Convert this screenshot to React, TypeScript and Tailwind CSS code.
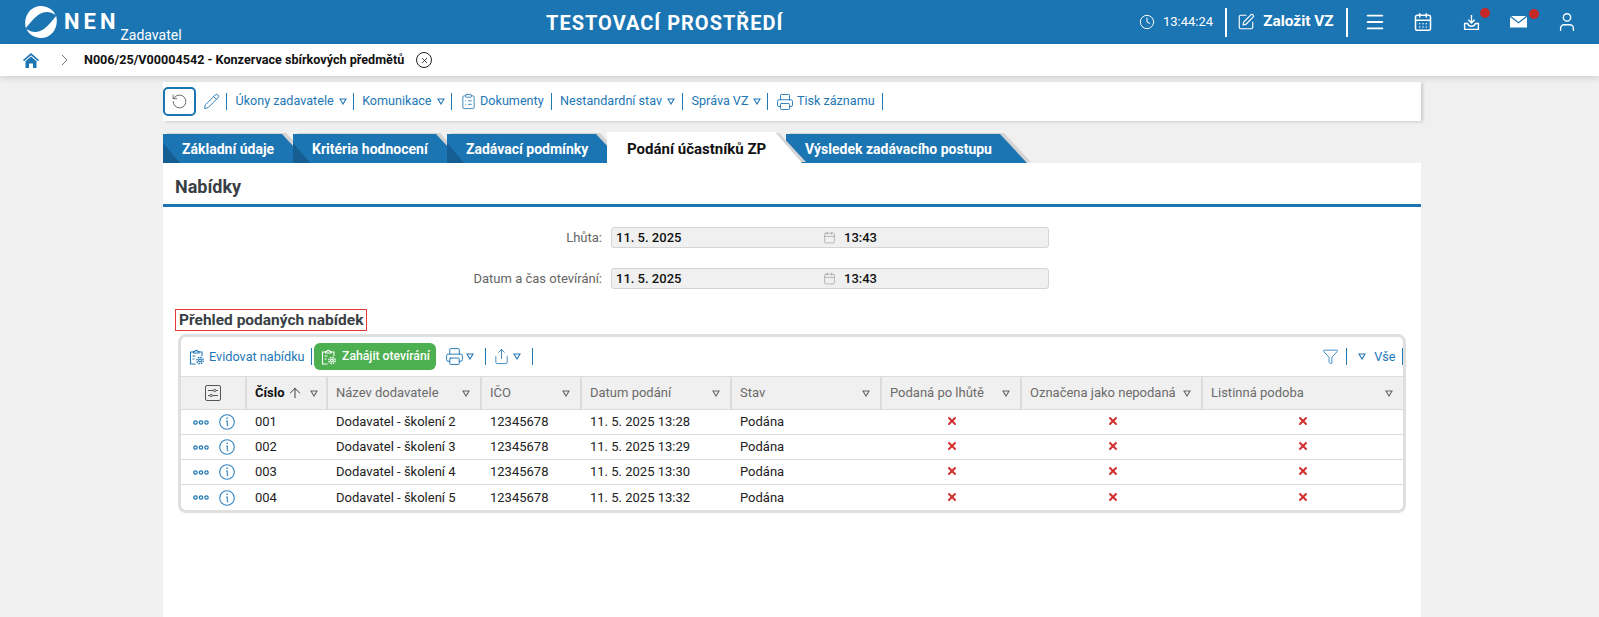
import { ArrowUp, Calendar, CalendarDays, ClipboardList, Clock, Funnel, Menu, Pencil, Printer, RotateCcw, Share, SquarePen, User, X } from 'lucide-react'

const TABS = [
    { label: 'Základní údaje', w: 146, pl: 19 },
    { label: 'Kritéria hodnocení', w: 170, pl: 19 },
    { label: 'Zadávací podmínky', w: 176, pl: 19 },
    { label: 'Podání účastníků ZP', w: 195, pl: 20, active: true },
    { label: 'Výsledek zadávacího postupu', w: 241, pl: 19 },
]

const ROWS = [
    ['001', 'Dodavatel - školení 2', '12345678', '11. 5. 2025 13:28'],
    ['002', 'Dodavatel - školení 3', '12345678', '11. 5. 2025 13:29'],
    ['003', 'Dodavatel - školení 4', '12345678', '11. 5. 2025 13:30'],
    ['004', 'Dodavatel - školení 5', '12345678', '11. 5. 2025 13:32'],
]

const COLS = ['Název dodavatele', 'IČO', 'Datum podání', 'Stav', 'Podaná po lhůtě', 'Označena jako nepodaná', 'Listinná podoba']
const GRID = 'grid grid-cols-[66px_81px_154px_100px_150px_150px_140px_181px_200px]'

function Tri({ className = 'text-[#2277b5]' }: { className?: string }) {
    return (
        <svg viewBox="0 0 8 7" className={`h-[7px] w-2 shrink-0 ${className}`} fill="none" stroke="currentColor" strokeWidth="1.1">
            <path d="M1 1h6L4 6z" />
        </svg>
    )
}

function Sep({ className = '' }: { className?: string }) {
    return <span className={`h-[17px] w-[1.5px] shrink-0 border-l border-[#2277b5] ${className}`} />
}

function HeaderSep({ className = '' }: { className?: string }) {
    return <span className={`h-[29px] w-[2px] shrink-0 bg-white ${className}`} />
}

function Logo() {
    return (
        <svg viewBox="0 0 32 32" className="h-8 w-8 shrink-0" fill="#fff">
            <path d="M.8 22C-2 11 5 0 16 0c6.500 0 12 3.500 14.500 9-6-4.500-13-3.500-18 .5C8 13 5 17 .8 22z" />
            <path d="M31.200 10C34 21 27 32 16 32 9.500 32 4 28.500 1.500 23c6 4.500 13 3.500 18-.5 4.500-3.500 7.500-7.500 11.700-12.500z" />
        </svg>
    )
}

function Home() {
    return (
        <svg viewBox="0 0 16 15" className="h-[15px] w-4 shrink-0" fill="#1c75b3">
            <path d="M8 0 0 7l1 1.200L8 2.200l7 6L16 7z" />
            <path d="M8 3.500 2.500 8.200V15H6v-4.500h4V15h3.500V8.200z" />
        </svg>
    )
}

function Inbox() {
    return (
        <svg viewBox="0 0 16 16" className="h-[17px] w-[17px]" fill="none" stroke="#fff" strokeWidth="1.3">
            <path d="M8 1v7M5 5.500 8 8.500l3-3" />
            <path d="M4.500 9H1.500v5.500h13V9h-3c-.5 2-1.500 2.500-3.500 2.500S5 11 4.500 9z" />
        </svg>
    )
}

function Envelope() {
    return (
        <svg viewBox="0 0 17 12" className="h-3 w-[17px]" fill="#fff">
            <path d="M1 0h15L8.500 6z" />
            <path d="M0 1v10.500h17V1L8.500 7.500z" />
        </svg>
    )
}

function GearClipboard({ className = 'text-[#2277b5]' }: { className?: string }) {
    return (
        <svg viewBox="0 0 16 16" className={`h-4 w-4 shrink-0 ${className}`} fill="none" stroke="currentColor" strokeWidth="1.1">
            <path d="M6.500 15H1.500V3h3M10 3h3v4" />
            <path d="M4.500 4V2.500h1.200C6 1 8.500 1 8.800 2.500H10V4z" />
            <path d="M3.500 7h3M3.500 10h2" />
            <circle cx="11" cy="11.500" r="1.400" />
            <circle cx="11" cy="11.500" r="3.200" strokeDasharray="1.500 1" strokeWidth="1.400" />
        </svg>
    )
}

function Sliders() {
    return (
        <svg viewBox="0 0 16 16" className="h-4 w-4" fill="none" stroke="#555" strokeWidth="1">
            <rect x="0.500" y="0.500" width="15" height="15" rx="1.500" />
            <path d="M3 5.500h5.500M11 5.500h2M3 10.500h2M7.500 10.500h5.500" />
            <circle cx="9.700" cy="5.500" r="1.200" />
            <circle cx="6.200" cy="10.500" r="1.200" />
        </svg>
    )
}

function Dots() {
    return (
        <svg viewBox="0 0 16 5" className="h-[5px] w-4" fill="none" stroke="#2277b5" strokeWidth="1.2">
            <circle cx="2.500" cy="2.500" r="1.700" />
            <circle cx="8" cy="2.500" r="1.700" />
            <circle cx="13.500" cy="2.500" r="1.700" />
        </svg>
    )
}

function InfoCircle() {
    return (
        <svg viewBox="0 0 16 16" className="ml-[10px] h-4 w-4 shrink-0" fill="none" stroke="#2f83bf" strokeWidth="1.1">
            <circle cx="8" cy="8" r="7.300" />
            <path d="M7 7h1.300v4c0 .6.3.9.9.9" />
            <path d="M8.100 3.600v1.300" strokeWidth="1.400" />
        </svg>
    )
}

function Tab({ label, w, pl, active }: { label: string; w: number; pl: number; active?: boolean }) {
    return (
        <div
            className={`relative -mr-[16px] flex h-[29px] shrink-0 items-center font-bold ${active ? 'z-10 text-[15px] text-[#111]' : 'text-[14px] text-white'}`}
            style={{ width: w, paddingLeft: pl }}
        >
            <div className="absolute inset-0 translate-x-[4px] -translate-y-[1px] bg-[#d4d4d4] [clip-path:polygon(0_0,calc(100%-27px)_0,100%_100%,0_100%)]" />
            <div className={`absolute inset-0 [clip-path:polygon(0_0,calc(100%-27px)_0,100%_100%,0_100%)] ${active ? '-top-[2px] bg-white' : 'bg-[#1c75b3]'}`} />
            {!active && <div className="absolute bottom-0 left-0 h-[20px] w-[17px] bg-[#155d92] [clip-path:polygon(0_0,100%_100%,0_100%)]" />}
            <span className="relative top-[1px] whitespace-nowrap">{label}</span>
        </div>
    )
}

function DateField({ label }: { label: string }) {
    return (
        <div className="flex h-[21px] items-center">
            <div className="w-[448px] pr-[9px] text-right text-[13px] text-[#666]">{label}</div>
            <div className="flex h-[21px] w-[438px] items-center rounded-[3px] border border-[#d4d4d4] bg-[#f0f0f0] pl-[4px] text-[13px] font-medium text-[#111]">
                <span className="w-[207px]">11. 5. 2025</span>
                <Calendar className="mr-[8px] h-[13px] w-[13px] text-[#8a8a8a]" strokeWidth={1} />
                <span>13:43</span>
            </div>
        </div>
    )
}

export default function App() {
    return (
        <div className="flex h-screen flex-col overflow-hidden bg-[#f0f0f0] font-['Roboto',sans-serif]">
            <header className="flex h-[44px] shrink-0 items-center bg-[#1c75b3] pl-[25px] text-white">
                <div className="flex h-full w-[521px] shrink-0 items-center">
                    <Logo />
                    <span className="ml-[7px] text-[22px] font-bold leading-none tracking-[4px]">NEN</span>
                    <span className="ml-[1px] mt-[26px] text-[14px] leading-none">Zadavatel</span>
                </div>
                <div className="mt-[1px] w-[236px] shrink-0 whitespace-nowrap text-center text-[20px] font-bold tracking-[1px]">TESTOVACÍ PROSTŘEDÍ</div>
                <div className="ml-[357px] flex items-center">
                    <Clock className="h-4 w-4" strokeWidth={1.5} />
                    <span className="ml-[8px] text-[13px]">13:44:24</span>
                    <HeaderSep className="ml-[12px]" />
                    <SquarePen className="ml-[10px] h-[18px] w-[18px]" strokeWidth={1.5} />
                    <span className="ml-[8px] text-[15.4px] font-bold">Založit VZ</span>
                    <HeaderSep className="ml-[12px]" />
                    <Menu className="ml-[16px] h-[22px] w-[22px]" strokeWidth={2} />
                    <CalendarDays className="ml-[27px] h-[20px] w-[20px]" strokeWidth={1.8} />
                    <div className="relative ml-[30px]">
                        <Inbox />
                        <span className="absolute -right-[10px] -top-[6px] h-[10px] w-[10px] rounded-full bg-[#c62828]" />
                    </div>
                    <div className="relative ml-[30px]">
                        <Envelope />
                        <span className="absolute -right-[12px] -top-[7px] h-[10px] w-[10px] rounded-full bg-[#c62828]" />
                    </div>
                    <User className="ml-[29px] h-[22px] w-[22px]" strokeWidth={1.5} />
                </div>
            </header>

            <div className="z-20 flex h-[32px] shrink-0 items-center bg-white pl-[23px] shadow-[0_2px_6px_rgba(0,0,0,0.15)]">
                <Home />
                <svg viewBox="0 0 7 12" className="ml-[22px] h-3 w-[7px]" fill="none" stroke="#777" strokeWidth="1"><path d="m1 1 5 5-5 5" /></svg>
                <span className="ml-[16px] whitespace-nowrap text-[12.6px] font-bold text-[#111]">N006/25/V00004542 - Konzervace sbírkových předmětů</span>
                <span className="ml-[12px] flex h-4 w-4 items-center justify-center rounded-full border border-[#222]">
                    <X className="h-[9px] w-[9px] text-[#222]" strokeWidth={2.2} />
                </span>
            </div>

            <main className="ml-[163px] flex w-[1258px] flex-1 flex-col pt-[6px]">
                <div className="flex h-[39px] shrink-0 items-center bg-white text-[12.6px] text-[#2277b5] shadow-[2px_1px_3px_rgba(0,0,0,0.15)]">
                    <span className="flex h-[29px] w-[33px] items-center justify-center rounded-[5px] border-2 border-[#1c75b3]">
                        <RotateCcw className="h-[17px] w-[17px] text-[#555]" strokeWidth={1.2} />
                    </span>
                    <Pencil className="ml-[7px] h-[17px] w-[17px]" strokeWidth={1.3} />
                    <Sep className="ml-[6px]" />
                    <span className="ml-[8px] whitespace-nowrap">Úkony zadavatele</span>
                    <Tri className="ml-[5px]" />
                    <Sep className="ml-[6px]" />
                    <span className="ml-[8px]">Komunikace</span>
                    <Tri className="ml-[5px]" />
                    <Sep className="ml-[6px]" />
                    <ClipboardList className="ml-[8px] h-[17px] w-[17px]" strokeWidth={1.2} />
                    <span className="ml-[3px]">Dokumenty</span>
                    <Sep className="ml-[7px]" />
                    <span className="ml-[8px] whitespace-nowrap">Nestandardní stav</span>
                    <Tri className="ml-[5px]" />
                    <Sep className="ml-[7px]" />
                    <span className="ml-[8px] whitespace-nowrap">Správa VZ</span>
                    <Tri className="ml-[5px]" />
                    <Sep className="ml-[6px]" />
                    <Printer className="ml-[7px] h-[18px] w-[18px]" strokeWidth={1.2} />
                    <span className="ml-[3px] whitespace-nowrap">Tisk záznamu</span>
                    <Sep className="ml-[7px]" />
                </div>

                <div className="mt-[13px] flex shrink-0">
                    {TABS.map((t) => <Tab key={t.label} {...t} />)}
                </div>

                <section className="flex-1 bg-white">
                    <h1 className="flex h-[44px] items-center border-b-[3px] border-[#1c75b3] pl-[12px] pt-[6px] text-[18px] font-bold text-[#3a3f45]">Nabídky</h1>

                    <div className="mt-[20px] flex flex-col gap-[20px]">
                        <DateField label="Lhůta:" />
                        <DateField label="Datum a čas otevírání:" />
                    </div>

                    <h2 className="ml-[12px] mt-[20px] inline-block border border-[#e53935] px-[3px] text-[15.5px] font-bold leading-[20px] text-[#3a3f45]">Přehled podaných nabídek</h2>

                    <div className="ml-[15px] mt-[2px] w-[1228px] overflow-hidden rounded-[8px] border-[3px] border-[#dfdfdf]">
                        <div className="flex h-[39px] items-center text-[12.7px] text-[#2277b5]">
                            <GearClipboard className="ml-[8px]" />
                            <span className="ml-[4px] whitespace-nowrap">Evidovat nabídku</span>
                            <Sep className="ml-[6px]" />
                            <span className="ml-[2px] flex h-[27px] items-center rounded-[6px] bg-[#4caf50] pl-[7px] pr-[6px] text-[12.2px] font-medium text-white">
                                <GearClipboard className="text-white" />
                                <span className="ml-[5px] whitespace-nowrap">Zahájit otevírání</span>
                            </span>
                            <Printer className="ml-[9px] h-[19px] w-[19px]" strokeWidth={1.2} />
                            <Tri className="ml-[2px]" />
                            <Sep className="ml-[11px]" />
                            <Share className="ml-[7px] h-[17px] w-[17px]" strokeWidth={1.2} />
                            <Tri className="ml-[3px]" />
                            <Sep className="ml-[11px]" />
                            <Funnel className="ml-auto h-[17px] w-[17px] text-[#3f8fc9]" strokeWidth={1.4} />
                            <Sep className="ml-[7px]" />
                            <Tri className="ml-[11px]" />
                            <span className="ml-[8px]">Vše</span>
                            <Sep className="ml-[6px]" />
                        </div>

                        <div className={`${GRID} h-[34px] border-y border-[#dcdcdc] bg-[#f0f0f0] text-[13px] text-[#6b6b6b]`}>
                            <div className="flex items-center justify-center border-r-2 border-[#dcdcdc]"><Sliders /></div>
                            <div className="flex items-center border-r-2 border-[#dcdcdc] pl-[8px] pr-[8px]">
                                <span className="font-bold text-[#111]">Číslo</span>
                                <ArrowUp className="ml-[2px] h-4 w-4 text-[#333]" strokeWidth={1.4} />
                                <Tri className="ml-auto text-[#666]" />
                            </div>
                            {COLS.map((c) => (
                                <div key={c} className="flex items-center justify-between whitespace-nowrap border-r-2 border-[#dcdcdc] pl-[8px] pr-[10px] last:border-r-0">
                                    {c}
                                    <Tri className="text-[#666]" />
                                </div>
                            ))}
                        </div>

                        {ROWS.map((r) => (
                            <div key={r[0]} className={`${GRID} h-[25px] items-center border-b border-[#dcdcdc] text-[13px] text-[#222] last:border-b-0`}>
                                <div className="flex items-center pl-[12px]">
                                    <Dots />
                                    <InfoCircle />
                                </div>
                                <div className="pl-[8px]">{r[0]}</div>
                                <div className="pl-[8px]">{r[1]}</div>
                                <div className="pl-[8px]">{r[2]}</div>
                                <div className="pl-[8px]">{r[3]}</div>
                                <div className="pl-[8px]">Podána</div>
                                <div className="mb-[2px] flex justify-center"><X className="h-3 w-3 text-[#d32f2f]" strokeWidth={4} /></div>
                                <div className="mb-[2px] flex justify-center"><X className="h-3 w-3 text-[#d32f2f]" strokeWidth={4} /></div>
                                <div className="mb-[2px] flex justify-center"><X className="h-3 w-3 text-[#d32f2f]" strokeWidth={4} /></div>
                            </div>
                        ))}
                    </div>
                </section>
            </main>
        </div>
    )
}
